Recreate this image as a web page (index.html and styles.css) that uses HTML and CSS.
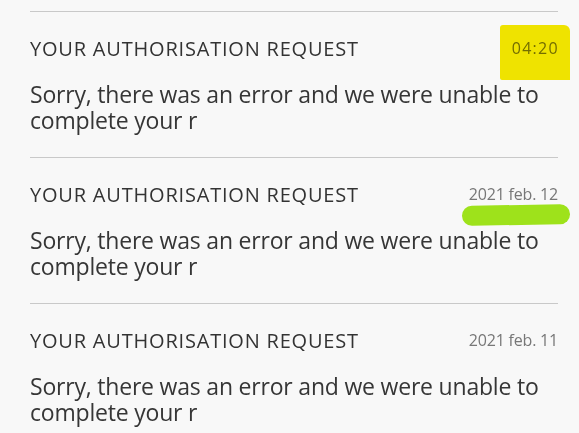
FILE: index.html
```html
<!DOCTYPE html>
<html>
<head>
<meta charset="utf-8">
<link rel="stylesheet" href="styles.css">
</head>
<body>
<ul class="list">
  <li class="item">
    <div class="head">
      <span class="title">YOUR AUTHORISATION REQUEST</span>
      <span class="date time">04:20<span class="mark-yellow"></span></span>
    </div>
    <p class="msg">Sorry, there was an error and we were unable to complete your r</p>
  </li>
  <li class="item">
    <div class="head">
      <span class="title">YOUR AUTHORISATION REQUEST</span>
      <span class="date">2021 feb. 12<span class="mark-green"></span></span>
    </div>
    <p class="msg">Sorry, there was an error and we were unable to complete your r</p>
  </li>
  <li class="item">
    <div class="head">
      <span class="title">YOUR AUTHORISATION REQUEST</span>
      <span class="date">2021 feb. 11</span>
    </div>
    <p class="msg">Sorry, there was an error and we were unable to complete your r</p>
  </li>
</ul>
</body>
</html>
```

FILE: styles.css
```css
html, body {
  margin: 0;
  padding: 0;
  background: #f8f8f8;
  overflow: hidden;
}
body {
  font-family: "Open Sans", "Noto Sans", sans-serif;
  color: #3a3a3a;
}
.list {
  list-style: none;
  margin: 0;
  padding: 11px 21px 0 30px;
}
.item {
  border-top: 1.5px solid #c9c9c9;
  height: 145px;
}
.head {
  display: flex;
  justify-content: space-between;
  align-items: center;
  height: 26px;
  margin-top: 23px;
}
.title {
  font-size: 20px;
  letter-spacing: 0.8px;
  color: #333;
}
.date {
  position: relative;
  font-size: 16px;
  line-height: 22px;
  color: #777;
  letter-spacing: -0.2px;
}
.time {
  letter-spacing: 1.3px;
  margin-right: -1px;
}
.msg {
  margin: 20px 0 0 0;
  font-size: 23px;
  line-height: 26px;
  color: #363636;
  letter-spacing: -0.2px;
  padding-right: 10px;
}
.mark-yellow {
  position: absolute;
  left: -12px;
  right: -11px;
  top: -12px;
  bottom: -21px;
  background: #f6ea00;
  mix-blend-mode: multiply;
  border-radius: 3px 6px 0 2px;
}
.mark-green {
  position: absolute;
  left: -7px;
  right: -12px;
  top: 22px;
  height: 20px;
  background: #9ee21b;
  border-radius: 10px;
  transform: rotate(-1deg);
}
```
